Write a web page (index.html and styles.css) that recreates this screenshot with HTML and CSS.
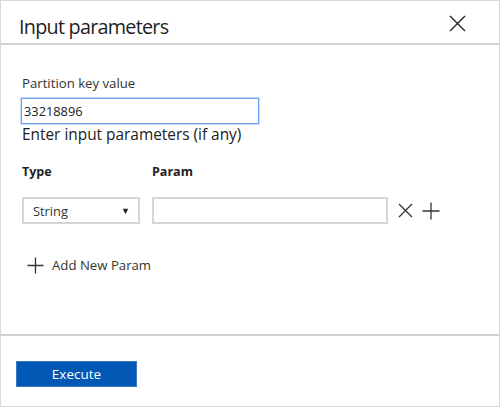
FILE: index.html
```html
<!DOCTYPE html>
<html>
<head>
<meta charset="utf-8">
<link rel="stylesheet" href="styles.css">
</head>
<body>
<div class="dialog">
  <div class="header">
    <div class="title">Input parameters</div>
    <button class="close" aria-label="Close">
      <svg width="17" height="17" viewBox="0 0 17 17"><path d="M1 1L16 16M16 1L1 16" stroke="#222" stroke-width="1.4" fill="none"/></svg>
    </button>
  </div>
  <div class="content">
    <div class="label">Partition key value</div>
    <input class="pk-input" type="text" value="33218896">
    <div class="hint">Enter input parameters (if any)</div>
    <div class="cols">
      <div class="col-type">Type</div>
      <div class="col-param">Param</div>
    </div>
    <div class="param-row">
      <div class="select">
        <span>String</span>
        <span class="arrow">&#9660;</span>
      </div>
      <input class="param-input" type="text">
      <svg class="icon-x" width="15" height="15" viewBox="0 0 15 15"><path d="M1 1L14 14M14 1L1 14" stroke="#333" stroke-width="1.3" fill="none"/></svg>
      <svg class="icon-plus" width="18" height="18" viewBox="0 0 18 18"><path d="M9 0.5V17.5M0.5 9H17.5" stroke="#333" stroke-width="1.3" fill="none"/></svg>
    </div>
    <div class="add-row">
      <svg class="icon-add" width="17" height="17" viewBox="0 0 17 17"><path d="M8.5 0.5V16.5M0.5 8.5H16.5" stroke="#333" stroke-width="1.3" fill="none"/></svg>
      <span>Add New Param</span>
    </div>
  </div>
  <div class="footer">
    <button class="execute">Execute</button>
  </div>
</div>
</body>
</html>
```
FILE: styles.css
```css
* { box-sizing: border-box; }
body {
  margin: 0;
  font-family: "Open Sans", "Noto Sans", sans-serif;
  color: #222;
  background: #fff;
}
.dialog {
  width: 500px;
  height: 407px;
  border: 1px solid #d9d9d9;
  display: flex;
  flex-direction: column;
}
.header {
  height: 44px;
  border-bottom: 2px solid #d0d0d0;
  display: flex;
  align-items: center;
  justify-content: space-between;
  padding: 0 33px 0 18px;
  flex-shrink: 0;
}
.title {
  font-size: 19.8px;
  color: #1e1e1e;
  letter-spacing: -0.75px;
  padding-top: 8px;
}
.close {
  border: 0;
  background: none;
  padding: 0;
  width: 17px;
  height: 17px;
  display: block;
  margin-top: 3px;
}
.close svg { display: block; }
.content {
  flex: 1;
  padding: 29px 20px 0 20px;
  border-bottom: 2px solid #d0d0d0;
}
.label {
  font-size: 13.2px;
  color: #333;
  padding-left: 1px;
  line-height: 19px;
}
.pk-input {
  display: block;
  margin-top: 5px;
  width: 238px;
  height: 26px;
  border: 1px solid #6aa0f0;
  box-shadow: 0 0 0 1px #c9dcfb;
  font-family: inherit;
  font-size: 12.8px;
  color: #222;
  padding: 0 2px;
  outline: none;
}
.hint {
  font-size: 15.4px;
  color: #222;
  line-height: 21px;
  padding-left: 1px;
}
.cols {
  display: flex;
  margin-top: 19px;
  font-size: 12.5px;
  font-weight: 700;
  line-height: 16px;
  color: #222;
}
.col-type { width: 131px; padding-left: 1px; }
.param-row {
  display: flex;
  align-items: center;
  margin-top: 17px;
}
.select {
  width: 118px;
  height: 27px;
  border: 2px solid #d6d6d6;
  display: flex;
  align-items: center;
  justify-content: space-between;
  padding: 0 8px 0 9px;
  font-size: 12.8px;
  color: #333;
  margin-left: 1px;
}
.arrow { font-size: 9px; color: #222; }
.param-input {
  margin-left: 12px;
  width: 236px;
  height: 27px;
  border: 2px solid #d6d6d6;
  outline: none;
}
.icon-x { margin-left: 10px; }
.icon-plus { margin-left: 9px; }
.add-row {
  display: flex;
  align-items: center;
  margin-top: 32px;
  padding-left: 6px;
  font-size: 13.2px;
  color: #333;
}
.icon-add { margin-right: 8px; }
.footer {
  flex-shrink: 0;
  height: 70px;
  padding: 25px 0 0 15px;
}
.execute {
  width: 121px;
  height: 26px;
  background: #0158b5;
  border: 1px solid #3a78c4;
  color: #fff;
  font-family: inherit;
  font-size: 13.5px;
  padding: 0;
}
```
